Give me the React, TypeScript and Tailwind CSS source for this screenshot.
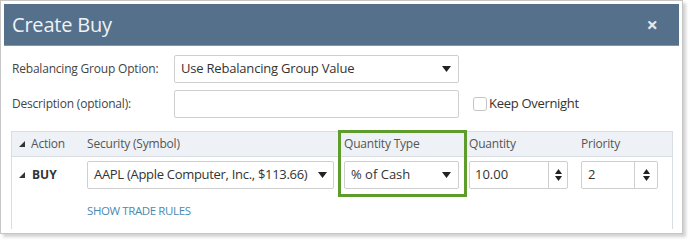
import React from "react";

const font = { fontFamily: '"Open Sans", "Noto Sans", sans-serif' };

function Caret() {
  return (
    <svg width="9" height="6" viewBox="0 0 9 6" className="shrink-0">
      <polygon points="0,0 9,0 4.5,6" fill="#222" />
    </svg>
  );
}

function Spinner() {
  return (
    <svg width="7" height="12" viewBox="0 0 7 12">
      <polygon points="3.5,0 7,5 0,5" fill="#222" />
      <polygon points="0,7 7,7 3.5,12" fill="#222" />
    </svg>
  );
}

function Tri() {
  return (
    <svg width="6" height="6" viewBox="0 0 6 6" className="shrink-0">
      <polygon points="0,6 6,6 6,0" fill="#333" />
    </svg>
  );
}

export default function App() {
  return (
    <div className="w-[692px] h-[243px] bg-white relative" style={font}>
      <div className="w-[683px] h-[234px] border border-[#c6c6c6] bg-white p-[3px] flex flex-col shadow-[3px_3px_3px_rgba(0,0,0,0.18)]">
        <div className="h-[42px] shrink-0 bg-[#55708a] flex items-center justify-between pl-[8px] pr-[21px] border-b border-[#7f95a8]">
          <span className="text-[20px] text-[#eef3f7] leading-none tracking-[-0.2px]">Create Buy</span>
          <span className="text-[20px] font-bold text-[#e2e8ee] leading-none">×</span>
        </div>
        <div className="flex flex-col flex-1 pt-[9px]">
          <div className="flex items-center h-[28px]">
            <div className="w-[170px] pl-[8px] text-[12px] text-[#444] tracking-[-0.2px]">Rebalancing Group Option:</div>
            <div className="w-[285px] h-[28px] border border-[#cfcfcf] rounded-[2px] flex items-center justify-between pl-[6px] pr-[7px] text-[13px] text-[#333] tracking-[-0.2px]">
              <span>Use Rebalancing Group Value</span>
              <Caret />
            </div>
          </div>
          <div className="flex items-center h-[28px] mt-[7px]">
            <div className="w-[170px] pl-[8px] text-[12px] text-[#444] tracking-[-0.2px]">Description (optional):</div>
            <div className="w-[285px] h-[28px] border border-[#cfcfcf] rounded-[2px]" />
            <div className="ml-[14px] w-[14px] h-[14px] border border-[#c4c4c4] rounded-[3px] bg-white" />
            <span className="ml-[2px] text-[13px] text-[#333] tracking-[-0.3px]">Keep Overnight</span>
          </div>
          <div className="relative mt-[13px] ml-[7px] mr-[6px] flex-1 mb-[1px] border-l border-r border-t border-[#d7dde3] flex flex-col">
            <div className="h-[25px] bg-[#eef2f6] border-b border-[#d7dde3] grid grid-cols-[75px_257px_125px_112px_1fr] items-center text-[12px] text-[#555] tracking-[-0.2px]">
              <div className="flex items-center pl-[7px] gap-[6px]"><Tri /><span>Action</span></div>
              <div>Security (Symbol)</div>
              <div>Quantity Type</div>
              <div>Quantity</div>
              <div>Priority</div>
            </div>
            <div className="mt-[4px] grid grid-cols-[75px_257px_125px_112px_1fr] items-center h-[28px]">
              <div className="flex items-center pl-[7px] gap-[7px]"><Tri /><span className="text-[12px] font-bold text-[#333]">BUY</span></div>
              <div className="w-[247px] h-[28px] border border-[#cfcfcf] rounded-[2px] flex items-center justify-between pl-[6px] pr-[6px] text-[13px] text-[#333] tracking-[-0.3px]">
                <span>AAPL (Apple Computer, Inc., $113.66)</span>
                <Caret />
              </div>
              <div className="w-[115px] h-[28px] border border-[#cfcfcf] rounded-[2px] flex items-center justify-between pl-[6px] pr-[7px] text-[13px] text-[#333]">
                <span>% of Cash</span>
                <Caret />
              </div>
              <div className="w-[99px] h-[28px] border border-[#cfcfcf] rounded-[2px] flex items-stretch text-[13px] text-[#333]">
                <div className="flex-1 flex items-center pl-[5px]">10.00</div>
                <div className="w-[19px] border-l border-[#cfcfcf] flex items-center justify-center"><Spinner /></div>
              </div>
              <div className="w-[77px] h-[28px] border border-[#cfcfcf] rounded-[2px] flex items-stretch text-[13px] text-[#333]">
                <div className="flex-1 flex items-center pl-[6px]">2</div>
                <div className="w-[23px] border-l border-[#cfcfcf] flex items-center justify-center"><Spinner /></div>
              </div>
            </div>
            <div className="pl-[75px] mt-[16px] text-[11.5px] text-[#4a8ab0] tracking-[-0.4px] leading-none">SHOW TRADE RULES</div>
            <div className="absolute left-[326px] top-[-2px] w-[129px] h-[67px] border-[3px] border-[#5e9c2c]" />
          </div>
        </div>
      </div>
    </div>
  );
}
